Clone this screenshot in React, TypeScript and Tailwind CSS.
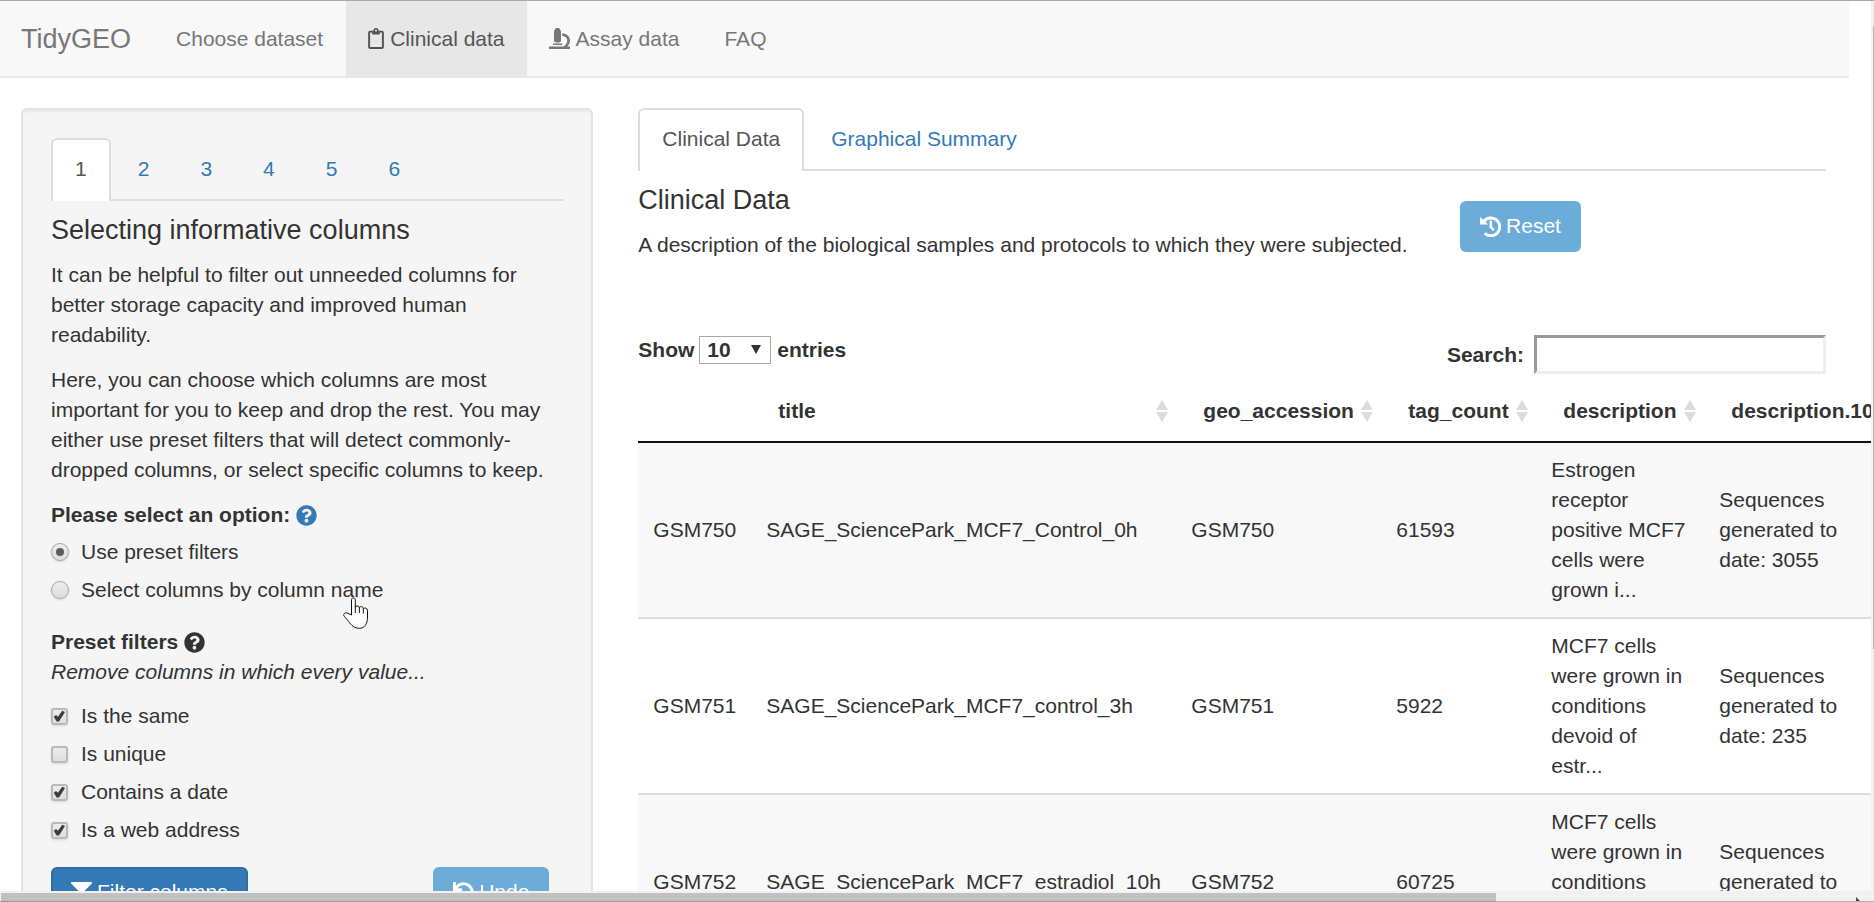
import React from "react";
import { FaFilter, FaQuestionCircle, FaRegClipboard, FaUndo } from "react-icons/fa";

const steps = ["1", "2", "3", "4", "5", "6"];

const filters = [
  { id: "same", label: "Is the same", on: true },
  { id: "unique", label: "Is unique", on: false },
  { id: "date", label: "Contains a date", on: true },
  { id: "web", label: "Is a web address", on: true },
];

const headers = ["title", "geo_accession", "tag_count", "description", "description.10"];

const rows = [
  ["GSM750", "SAGE_SciencePark_MCF7_Control_0h", "GSM750", "61593", "Estrogen receptor positive MCF7 cells were grown i...", "Sequences generated to date: 3055"],
  ["GSM751", "SAGE_SciencePark_MCF7_control_3h", "GSM751", "5922", "MCF7 cells were grown in conditions devoid of estr...", "Sequences generated to date: 235"],
  ["GSM752", "SAGE_SciencePark_MCF7_estradiol_10h", "GSM752", "60725", "MCF7 cells were grown in conditions devoid of estr...", "Sequences generated to date: 2984"],
];

const tabBase = "block rounded-t-md border-2 px-[22px] pt-[14px] pb-[17px] -mb-[2px]";
const tabOn = "border-[#ddd] border-b-transparent bg-white text-[#555]";
const tabOff = "border-transparent text-[#337ab7]";

function Tabs({ items }: { items: string[] }) {
  return (
    <nav className="flex h-[63px] gap-[3px] border-b-2 border-[#ddd]">
      {items.map((t, i) => (
        <a key={t} href="#" className={`${tabBase} h-[63px] ${i === 0 ? "border-b-0 " + tabOn : tabOff}`}>
          {t}
        </a>
      ))}
    </nav>
  );
}

function MicroscopeIcon() {
  return (
    <svg className="size-[21px]" viewBox="0 0 21 21" fill="currentColor" aria-hidden="true">
      <rect x="5" y="1.4" width="7" height="13.2" rx="2" />
      <rect x="6.2" y="0" width="4.6" height="4" rx="1.2" />
      <rect x="4" y="15.6" width="9.4" height="1.4" rx="0.4" />
      <path d="M13.2 5.2C17.6 5.4 21 8.4 21 12.4 21 15 19.8 17 18.2 18.4H21V21H0V18.9Q0 18.4 .5 18.4H14.4C16.6 17.2 18.2 15.2 18.2 12.4 18.2 9.8 16 8 13.2 7.9Z" />
    </svg>
  );
}

function HistoryIcon() {
  return (
    <svg className="size-[21px]" viewBox="0 0 21 21" fill="none" stroke="currentColor" aria-hidden="true">
      <path d="M4 5.2A8.9 8.9 0 1 1 4.6 17.2" strokeWidth="3" />
      <path d="M0 .8 8.2 8.6H0Z" fill="currentColor" stroke="none" />
      <path d="M10.8 5.8V11L13.2 13.6" strokeWidth="2.5" strokeLinecap="round" strokeLinejoin="round" />
    </svg>
  );
}

function SortIcon() {
  return (
    <svg className="absolute top-[19px] right-2 h-[22px] w-3" viewBox="0 0 12 22" fill="#dcdcdc" aria-hidden="true">
      <path d="M6 0 12 10H0zM6 22 0 12h12z" />
    </svg>
  );
}

function Radio({ id, label, on }: { id: string; label: string; on?: boolean }) {
  return (
    <div className="flex items-center gap-3">
      <span className="relative flex">
        <input
          type="radio"
          id={id}
          name="mode"
          defaultChecked={on}
          className="peer size-[18px] appearance-none rounded-full border border-[#a8a8a8] bg-linear-to-b from-[#eee] to-[#dcdcdc] shadow-sm"
        />
        <span className="pointer-events-none absolute inset-[5px] hidden rounded-full bg-[#5f5b54] peer-checked:block" />
      </span>
      <label htmlFor={id}>{label}</label>
    </div>
  );
}

function Check({ id, label, on }: { id: string; label: string; on: boolean }) {
  return (
    <div className="flex items-center gap-[13px]">
      <span className="relative flex">
        <input
          type="checkbox"
          id={id}
          defaultChecked={on}
          className="peer size-[17px] appearance-none rounded-[3px] border-2 border-[#b9b9b9] bg-linear-to-b from-[#ececec] to-[#dedede] shadow-sm"
        />
        <svg
          className="pointer-events-none absolute inset-0 hidden size-[17px] peer-checked:block"
          viewBox="0 0 17 17"
          fill="#3c3c3c"
          aria-hidden="true"
        >
          <path d="M2.8 8.8 5 7 7 8.8 11.2 2.8 14 4 8 13.4 5.6 13.4z" />
        </svg>
      </span>
      <label htmlFor={id}>{label}</label>
    </div>
  );
}

function HandCursor() {
  return (
    <svg className="pointer-events-none absolute top-[596px] left-[343px] h-8 w-[26px]" viewBox="0 0 26 32" aria-hidden="true">
      <path
        d="M8.5 18V2.6C8.5 .4 12.3.4 12.3 2.6V10C12.8 8.4 16.2 8.6 16.4 10.6 17.2 9 20 9.4 20.3 11.6 21.2 10.4 24.5 11 24.5 13.4V20C24.5 27 21.5 31.3 16.5 31.3 11 31.3 8.6 28.4 5.6 24.4L1.2 19.2C-.4 17 2.4 15 4.6 16.2Z"
        fill="#fff"
        stroke="#111"
        strokeWidth="1"
      />
      <path d="M12.3 9V16M16.4 10V16M20.3 11.5V16.5" fill="none" stroke="#111" strokeWidth="1" />
    </svg>
  );
}

export default function App() {
  return (
    <div className="relative flex h-screen flex-col overflow-hidden border-t border-[#aaa] bg-white font-['Liberation_Sans',Arial,sans-serif] text-[21px] leading-[30px] text-[#333]">
      <div className="flex min-h-0 flex-1">
        <div className="min-w-0 flex-1 overflow-hidden">
          <div className="mr-[22px]">
            <header className="flex h-[77px] items-stretch border-b-2 border-[#e7e7e7] bg-[#f8f8f8] text-[#777]">
              <a href="#" className="flex items-center pr-[22px] pl-[21px] text-[27px]">TidyGEO</a>
              <nav className="flex">
                <a href="#" className="flex items-center px-[23px]">Choose dataset</a>
                <a href="#" className="flex items-center gap-[6px] bg-[#e7e7e7] px-[22px] text-[#555]">
                  <FaRegClipboard className="h-[21px] w-4" />
                  Clinical data
                </a>
                <a href="#" className="flex items-center gap-[6px] px-[22px]">
                  <MicroscopeIcon />
                  Assay data
                </a>
                <a href="#" className="flex items-center px-[23px]">FAQ</a>
              </nav>
            </header>

            <div className="mt-[30px] flex items-start">
              <aside className="w-1/3 shrink-0 pr-[23px] pl-[21px]">
                <form className="rounded-md border-2 border-[#e3e3e3] bg-[#f5f5f5] p-7 shadow-[inset_0_2px_2px_rgba(0,0,0,0.05)]">
                  <Tabs items={steps} />
                  <h4 className="mt-[14px] mb-[15px] text-[27px]">Selecting informative columns</h4>
                  <p className="mb-[15px]">
                    It can be helpful to filter out unneeded columns for better storage capacity and improved human
                    readability.
                  </p>
                  <p className="mb-[15px]">
                    Here, you can choose which columns are most important for you to keep and drop the rest. You may
                    either use preset filters that will detect commonly-dropped columns, or select specific columns to
                    keep.
                  </p>
                  <div className="flex items-center gap-[6px] font-bold">
                    Please select an option:
                    <FaQuestionCircle className="size-[21px] text-[#337ab7]" />
                  </div>
                  <div className="mt-[7px] flex flex-col gap-2">
                    <Radio id="preset" label="Use preset filters" on />
                    <Radio id="by-name" label="Select columns by column name" />
                  </div>
                  <div className="mt-[22px] flex items-center gap-[6px] font-bold">
                    Preset filters
                    <FaQuestionCircle className="size-[21px]" />
                  </div>
                  <div className="italic">Remove columns in which every value...</div>
                  <div className="mt-[14px] flex flex-col gap-2">
                    {filters.map((f) => (
                      <Check key={f.id} id={f.id} label={f.label} on={f.on} />
                    ))}
                  </div>
                  <div className="mt-[22px] flex justify-between pr-[14px]">
                    <button
                      type="button"
                      className="flex h-[51px] items-center gap-[5px] rounded-md border-2 border-[#2e6da4] bg-[#337ab7] px-[18px] pb-px text-white"
                    >
                      <FaFilter className="size-[21px]" />
                      Filter columns
                    </button>
                    <button
                      type="button"
                      className="flex h-[51px] items-center gap-[5px] rounded-md bg-[#6bacd8] px-5 pb-px text-white"
                    >
                      <FaUndo className="size-[21px]" />
                      Undo
                    </button>
                  </div>
                </form>
              </aside>

              <main className="w-2/3 shrink-0 pr-[23px] pl-[22px]">
                <Tabs items={["Clinical Data", "Graphical Summary"]} />
                <div className="-mr-[23px] -ml-[22px] flex items-start">
                  <div className="w-2/3 shrink-0 px-[22px]">
                    <h4 className="mt-[14px] mb-[15px] text-[27px]">Clinical Data</h4>
                    <p className="mb-[15px]">
                      A description of the biological samples and protocols to which they were subjected.
                    </p>
                  </div>
                  <div className="w-1/3 px-[22px]">
                    <button
                      type="button"
                      className="mt-[30px] flex h-[51px] items-center gap-[5px] rounded-md bg-[#6bacd8] px-5 pb-px text-white"
                    >
                      <HistoryIcon />
                      Reset
                    </button>
                  </div>
                </div>

                <div className="mt-[60px] flex items-start justify-between font-bold">
                  <div className="flex items-center">
                    <label htmlFor="page-size">Show</label>
                    <span className="relative mr-[6px] ml-[5px] flex">
                      <select
                        id="page-size"
                        defaultValue="10"
                        className="h-7 w-[72px] appearance-none border border-[#a9a9a9] bg-white pl-[7px] leading-[26px]"
                      >
                        <option>10</option>
                        <option>25</option>
                      </select>
                      <svg
                        className="pointer-events-none absolute top-[9px] right-[10px] h-[9px] w-[10px]"
                        viewBox="0 0 10 9"
                        fill="#333"
                        aria-hidden="true"
                      >
                        <path d="M0 0h10L5 9z" />
                      </svg>
                    </span>
                    <span>entries</span>
                  </div>
                  <div className="flex items-center gap-[10px]">
                    <label htmlFor="search">Search:</label>
                    <input
                      id="search"
                      type="search"
                      className="h-[39px] w-[292px] border-[3px] border-t-[#9a9a9a] border-r-[#eee] border-b-[#eee] border-l-[#9a9a9a] bg-white"
                    />
                  </div>
                </div>

                <table className="mt-[7px] w-[1256px] table-fixed border-separate border-spacing-0 text-left">
                  <colgroup>
                    <col className="w-[113px]" />
                    <col className="w-[425px]" />
                    <col className="w-[205px]" />
                    <col className="w-[155px]" />
                    <col className="w-[168px]" />
                    <col className="w-[190px]" />
                  </colgroup>
                  <thead>
                    <tr>
                      <th className="border-b-2 border-[#111]" />
                      {headers.map((h) => (
                        <th key={h} className="relative border-b-2 border-[#111] py-[15px] pl-[27px] font-bold">
                          {h}
                          <SortIcon />
                        </th>
                      ))}
                    </tr>
                  </thead>
                  <tbody>
                    {rows.map((r, i) => (
                      <tr key={r[0]} className="odd:bg-[#f8f8f8]">
                        {r.map((c, j) => (
                          <td
                            key={j}
                            className={`px-[15px] py-3 align-middle ${i > 0 ? "border-t-2 border-[#ddd]" : ""}`}
                          >
                            {c}
                          </td>
                        ))}
                      </tr>
                    ))}
                  </tbody>
                </table>
              </main>
            </div>
          </div>
        </div>
        <div className="flex w-[3px] shrink-0 justify-end bg-[#f1f1f1] pt-[25px]">
          <div className="h-[72%] w-px bg-[#b8b8b8]" />
        </div>
      </div>
      <div className="flex h-[11px] shrink-0 items-end justify-between border-b border-[#b4b4b4] bg-[#f1f1f1] pr-[14px] pl-px">
        <div className="-mb-px h-[9px] w-[1495px] max-w-[81%] border-b border-[#999] bg-[#c1c1c1]" />
        <svg className="h-1 w-1" viewBox="0 0 4 4" fill="#444" aria-hidden="true">
          <path d="M0 0 4 4H0z" />
        </svg>
      </div>
      <HandCursor />
    </div>
  );
}
